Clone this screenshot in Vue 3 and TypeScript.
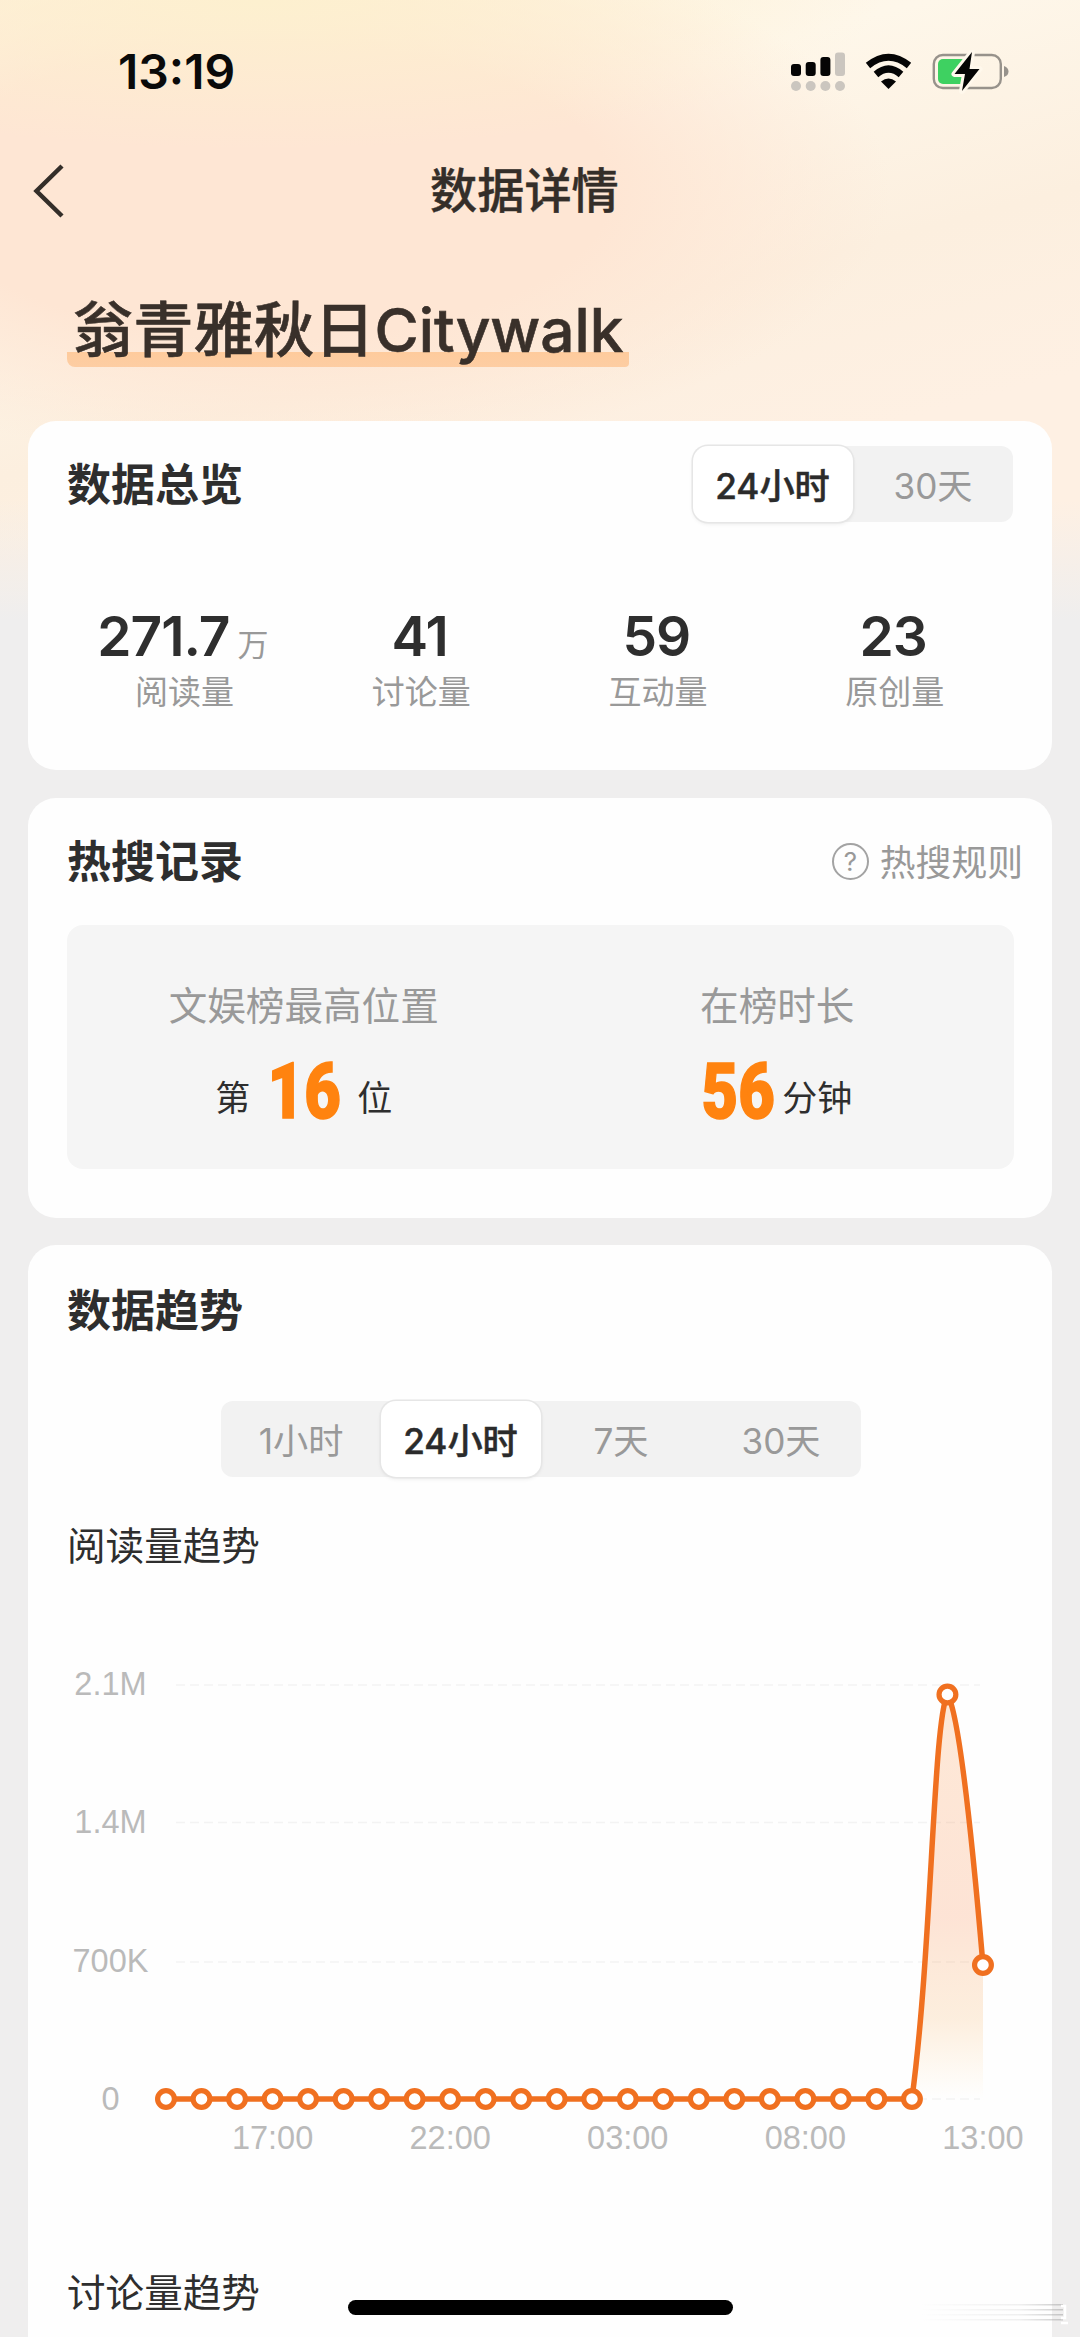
<script setup lang="ts">
interface Stat { value: string; unit?: string; label: string }

const stats: Stat[] = [
  { value: '271.7', unit: '万', label: '阅读量' },
  { value: '41', label: '讨论量' },
  { value: '59', label: '互动量' },
  { value: '23', label: '原创量' },
]
const overviewTabs = ['24小时', '30天']
const trendTabs = ['1小时', '24小时', '7天', '30天']
const active = '24小时'

const baseY = 469
const points = Array.from({ length: 24 }, (_, i) => ({
  x: 138 + i * 35.52,
  y: i === 22 ? 64.5 : i === 23 ? 335 : baseY,
}))
const spike = `C904 320 905 92 919.4 64.5 C932 84 946 230 955 335`
const linePath = `M138 ${baseY} H883.9 ${spike}`
const areaPath = `M883.9 ${baseY} ${spike} V${baseY} Z`
const yTicks = [
  { label: '2.1M', y: 53, line: 55 },
  { label: '1.4M', y: 191, line: 192.5 },
  { label: '700K', y: 330, line: 332 },
  { label: '0', y: 468, line: baseY },
]
const xTicks = [
  { label: '17:00', i: 3 },
  { label: '22:00', i: 8 },
  { label: '03:00', i: 13 },
  { label: '08:00', i: 18 },
  { label: '13:00', i: 23 },
]
</script>

<template>
  <div class="screen">
    <header class="status">
      <span class="time">13:19</span>
      <svg class="status-icons" width="220" height="44" viewBox="0 0 220 44">
        <g fill="#050505">
          <rect x="2" y="14" width="10" height="12" rx="3" />
          <rect x="16.7" y="12" width="10" height="14" rx="3" />
          <rect x="31.4" y="7" width="10" height="19" rx="3" />
        </g>
        <g fill="#cbc6bf">
          <rect x="46" y="2.500" width="10" height="23.500" rx="3" />
          <circle cx="7" cy="36" r="5" /><circle cx="21.700" cy="36" r="5" />
          <circle cx="36.400" cy="36" r="5" /><circle cx="51" cy="36" r="5" />
        </g>
        <g fill="none" stroke="#050505" stroke-width="7">
          <path d="M79 15.500 Q99.500 -1 120 15.500" />
          <path d="M87 24.500 Q99.500 13.500 112 24.500" />
        </g>
        <path d="M92 31.500 Q99.500 25.500 107 31.500 L99.500 39 Z" fill="#050505" />
        <rect x="144.800" y="5" width="67" height="33" rx="9" fill="none" stroke="#97928b" stroke-width="2.400" />
        <path d="M215 16 q4.500 1.500 4.500 5.500 t-4.500 5.500 Z" fill="#97928b" />
        <rect x="149" y="9" width="28" height="25" rx="5" fill="#3ed161" />
        <path d="M183 2 L165.500 24 H176 L173 41 L190.500 19 H180.500 Z" fill="#050505" stroke="#fff8ec" stroke-width="6" stroke-linejoin="round" paint-order="stroke" />
      </svg>
    </header>

    <nav class="nav">
      <svg class="back" width="34" height="56" viewBox="0 0 34 56">
        <path d="M32 3 L6.500 28 L32 53" fill="none" stroke="#342e29" stroke-width="4.500" />
      </svg>
      <span class="nav-title">数据详情</span>
    </nav>

    <div class="topic-row"><h1 class="topic">翁青雅秋日Citywalk</h1></div>

    <section class="card overview">
      <div class="card-head">
        <h2>数据总览</h2>
        <div class="tabs">
          <span v-for="t in overviewTabs" :key="t" class="tab" :class="{ on: t === active }">{{ t }}</span>
        </div>
      </div>
      <div class="stats">
        <div v-for="s in stats" :key="s.label" class="stat">
          <div class="stat-value">{{ s.value }}<small v-if="s.unit">{{ s.unit }}</small></div>
          <div class="stat-label">{{ s.label }}</div>
        </div>
      </div>
    </section>

    <section class="card record">
      <div class="card-head">
        <h2>热搜记录</h2>
        <div class="rules"><span class="help">?</span><span class="rules-text">热搜规则</span></div>
      </div>
      <div class="panel">
        <div class="cell">
          <div class="cell-label">文娱榜最高位置</div>
          <div class="cell-value"><span>第</span><b class="rank"><i>16</i></b><span>位</span></div>
        </div>
        <div class="cell">
          <div class="cell-label">在榜时长</div>
          <div class="cell-value"><b class="mins"><i>56</i></b><span>分钟</span></div>
        </div>
      </div>
    </section>

    <section class="card trend">
      <div class="card-head"><h2>数据趋势</h2></div>
      <div class="tabs trend-tabs">
        <span v-for="t in trendTabs" :key="t" class="tab" :class="{ on: t === active }">{{ t }}</span>
      </div>
      <h3>阅读量趋势</h3>
      <svg class="chart" width="1024" height="540" viewBox="0 0 1024 540">
        <defs>
          <linearGradient id="area" x1="0" y1="64" x2="0" y2="469" gradientUnits="userSpaceOnUse">
            <stop offset="0" stop-color="#fb923c" stop-opacity=".2" />
            <stop offset=".55" stop-color="#fb8a4c" stop-opacity=".23" />
            <stop offset=".8" stop-color="#f5a040" stop-opacity=".17" />
            <stop offset="1" stop-color="#fbb040" stop-opacity="0" />
          </linearGradient>
        </defs>
        <g v-for="t in yTicks" :key="t.label">
          <line x1="148" x2="952" :y1="t.line" :y2="t.line" stroke="#f3f3f3" stroke-width="1.500" stroke-dasharray="9 5" />
          <text class="tick" x="82.500" :y="t.y + 11.5">{{ t.label }}</text>
        </g>
        <path :d="areaPath" fill="url(#area)" />
        <path :d="linePath" fill="none" stroke="#f07020" stroke-width="5.500" stroke-linejoin="round" />
        <circle v-for="(p, i) in points" :key="i" :cx="p.x" :cy="p.y" r="8.400" fill="#fff" stroke="#f07020" stroke-width="5.200" />
        <text v-for="t in xTicks" :key="t.label" class="tick" :x="138 + t.i * 35.52" y="519">{{ t.label }}</text>
      </svg>
      <h3 class="next">讨论量趋势</h3>
    </section>
    <div class="home"></div>
    <svg class="mark" width="150" height="36" viewBox="0 0 150 36">
      <defs>
        <linearGradient id="streak" x1="0" x2="1">
          <stop offset="0" stop-color="#aaa" stop-opacity="0" />
          <stop offset=".7" stop-color="#aaa" stop-opacity=".18" />
          <stop offset="1" stop-color="#aaa" stop-opacity=".6" />
        </linearGradient>
      </defs>
      <g fill="url(#streak)">
        <rect y="7" width="143" height="1.500" /><rect y="12" width="143" height="1.500" />
        <rect y="17" width="143" height="1.500" /><rect y="22" width="143" height="1.500" />
      </g>
      <path d="M141 9 H145 V21 H141 M141 26 H148" fill="none" stroke="#fff" stroke-width="2.500" />
    </svg>
  </div>
</template>

<style>
body { margin: 0; background: #efeeee; }
</style>

<style scoped>
.screen {
  position: relative;
  width: 1080px;
  height: 2337px;
  overflow: hidden;
  box-sizing: border-box;
  display: flex;
  flex-direction: column;
  font-family: Inter, "Noto Sans CJK SC", sans-serif;
  color: #2e2e2e;
  background:
    linear-gradient(180deg, rgba(239, 238, 238, 0) 500px, #efeeee 620px),
    radial-gradient(ellipse 620px 150px at 260px 0, #fdf0cf 0%, rgba(253, 240, 207, 0) 100%),
    radial-gradient(ellipse 620px 270px at 270px 190px, #fee6d4 0%, #fee6d4 55%, rgba(254, 230, 212, 0) 100%),
    linear-gradient(165deg, #fef3df 0, #fef7ea 240px, #fcefdf 460px, #fef0e3 640px);
}
.status { flex: none; height: 110px; display: flex; justify-content: space-between; box-sizing: border-box; padding: 50px 71px 0 118px; }
.time { font-size: 48px; line-height: 44px; font-weight: 600; color: #0a0a0a; }
.nav { flex: none; height: 162px; display: flex; align-items: center; padding-left: 30px; }
.back { display: block; }
.nav-title { margin-left: 366px; font-size: 47.200px; line-height: 60px; font-weight: 500; color: #342e29; -webkit-text-stroke: .4px; }
.topic-row { flex: none; height: 149px; display: flex; align-items: flex-start; padding: 12px 0 0 67px; box-sizing: border-box; }
.topic { margin: 0; padding: 0 6px 0 6px; height: 83px; line-height: 94px; font-size: 60.300px; font-weight: 500; color: #39302a; white-space: nowrap; background: linear-gradient(#fecb9c, #fdcda3) 0 68px / 100% 15px no-repeat; border-radius: 4px 4px 4px 8px; -webkit-text-stroke: .6px; }

.card { flex: none; width: 1024px; margin-left: 28px; box-sizing: border-box; background: #fefefe; border-radius: 28px; }
.card h2 { margin: 2px 0 0; font-size: 44px; line-height: 60px; font-weight: 700; color: #2e2e2e; }
.card-head { display: flex; justify-content: space-between; align-items: center; height: 76px; padding: 0 39px; }
.overview { height: 349px; padding-top: 25px; }
.tabs { display: flex; background: #f2f2f2; border-radius: 12px; height: 76px; }
.tab { width: 160px; display: flex; align-items: center; justify-content: center; font-size: 35.200px; color: #999; box-sizing: border-box; padding-bottom: 2px; }
.tab.on { background: #fff; color: #2b2b2b; font-weight: 500; border-radius: 15px; box-shadow: 0 0 0 1.500px #e6e6e6, 0 2px 4px rgba(0, 0, 0, .08); -webkit-text-stroke: .5px; padding-right: 1px; }
.stats { display: grid; grid-template-columns: repeat(4, 1fr); width: 947px; margin: 76px 0 0 38px; }
.stat { text-align: center; }
.stat-value { height: 76px; line-height: 76px; margin-left: -3px; font-size: 55px; font-weight: 600; letter-spacing: -1px; white-space: nowrap; }
.stat-value small { margin-left: 8px; font-size: 31px; font-weight: 400; color: #999; letter-spacing: 0; }
.stat-label { line-height: 36px; font-size: 33px; color: #999; }

.record { height: 420px; margin-top: 28px; padding-top: 25px; }
.rules { display: flex; align-items: center; gap: 11px; font-size: 35.800px; color: #999; margin-right: -10px; }
.rules-text { padding-bottom: 3px; }
.help { width: 33px; height: 33px; border: 2px solid #a3a3a3; border-radius: 50%; font-size: 26px; line-height: 33px; text-align: center; }
.panel { width: 947px; height: 244px; margin: 26px 0 0 39px; background: #f5f5f5; border-radius: 16px; display: grid; grid-template-columns: 1fr 1fr; align-items: start; }
.cell { display: flex; flex-direction: column; align-items: center; padding-top: 56px; }
.cell-label { font-size: 38.600px; line-height: 50px; color: #999; }
.cell-value { display: flex; align-items: center; height: 86px; line-height: 86px; margin-top: 18px; font-size: 35px; color: #2e2e2e; }
.cell-value span { padding-top: 12px; }
.cell-value b { width: 71px; display: flex; justify-content: center; color: #ff830f; font-size: 78px; font-weight: 900; font-family: Roboto, sans-serif; }
.cell-value i { font-style: normal; transform: scaleX(.81); -webkit-text-stroke: 1.500px #ff830f; }
.rank { margin: 0 18px; }
.mins { margin-right: 9px; }

.trend { height: 1120px; margin-top: 27px; padding-top: 27px; border-radius: 28px 28px 0 0; }
.trend-tabs { width: 640px; margin: 53px auto 0 193px; }
.trend h3 { margin: 44px 0 0 39px; font-size: 38.600px; line-height: 50px; font-weight: 400; color: #2e2e2e; }
.chart { display: block; margin-top: 59px; }
.tick { font-family: "Liberation Sans", Arial, sans-serif; font-size: 32.500px; fill: #bababa; text-anchor: middle; }
.trend .next { margin-top: 98px; }
.home { position: absolute; left: 348px; top: 2300px; width: 385px; height: 15px; border-radius: 8px; background: #000; }
.mark { position: absolute; left: 920px; top: 2297px; }
</style>
